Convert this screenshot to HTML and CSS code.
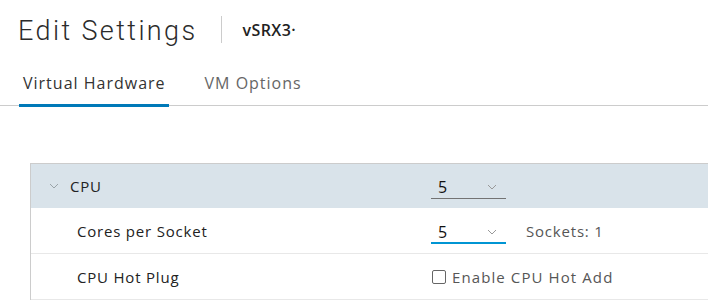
FILE: index.html
```html
<!DOCTYPE html>
<html lang="en">
<head>
    <meta charset="UTF-8">
    <meta name="viewport" content="width=device-width, initial-scale=1.0">
    <title>Edit Settings</title>
    <link rel="stylesheet" href="styles.css">
</head>
<body>
    <div class="modal">
        <div class="modal-header">
            <h1 class="title">Edit Settings</h1>
            <span class="divider"></span>
            <span class="vm-name">vSRX3&middot;</span>
        </div>

        <div class="tabs">
            <a class="tab active">Virtual Hardware</a>
            <a class="tab">VM Options</a>
        </div>

        <div class="hw-list">
            <div class="row group">
                <div class="label">
                    <svg class="caret" width="10" height="6" viewBox="0 0 10 6"><path d="M1 1l4 4 4-4" fill="none" stroke="#9aa3a8" stroke-width="1"/></svg>
                    CPU
                </div>
                <div class="value">
                    <div class="select">
                        <span>5</span>
                        <svg width="10" height="6" viewBox="0 0 10 6"><path d="M1 1l4 4 4-4" fill="none" stroke="#999" stroke-width="1"/></svg>
                    </div>
                </div>
            </div>

            <div class="row">
                <div class="label sub">Cores per Socket</div>
                <div class="value">
                    <div class="select focus">
                        <span>5</span>
                        <svg width="10" height="6" viewBox="0 0 10 6"><path d="M1 1l4 4 4-4" fill="none" stroke="#999" stroke-width="1"/></svg>
                    </div>
                    <span class="hint">Sockets: 1</span>
                </div>
            </div>

            <div class="row">
                <div class="label sub">CPU Hot Plug</div>
                <div class="value">
                    <label class="check"><span class="box"></span>Enable CPU Hot Add</label>
                </div>
            </div>
        </div>
    </div>
</body>
</html>
```

FILE: styles.css
```css
body {
    margin: 0;
    font-family: "Open Sans", Lato, sans-serif;
    color: #313131;
    background: #fff;
}

.modal {
    width: 708px;
    height: 302px;
    overflow: hidden;
}

.modal-header {
    display: flex;
    align-items: center;
    height: 58px;
    box-sizing: border-box;
    padding: 4px 0 0 18px;
}

.title {
    margin: 0;
    font-family: Roboto, "Open Sans", sans-serif;
    font-size: 27px;
    font-weight: 300;
    color: #2b2b2b;
    letter-spacing: 2.4px;
}

.divider {
    width: 1px;
    height: 27px;
    background: #ccc;
    margin: -3px 21px 0 23px;
}

.vm-name {
    font-size: 16px;
    font-weight: 600;
    color: #222;
    letter-spacing: 0.4px;
    margin-top: -2px;
}

.tabs {
    display: flex;
    margin-top: 12px;
    border-bottom: 1px solid #ccc;
}

.tab {
    font-size: 16px;
    color: #666;
    padding: 2px 3px 10px 4px;
    margin-left: 19px;
    letter-spacing: 1px;
}

.tab.active {
    color: #333;
    border-bottom: 3px solid #0079b8;
    margin-bottom: -2px;
}

.tab + .tab {
    margin-left: 32px;
}

.hw-list {
    margin: 57px 0 0 30px;
    border-top: 1px solid #ccc;
    border-left: 1px solid #ccc;
}

.row {
    display: grid;
    grid-template-columns: 400px 1fr;
    align-items: center;
    height: 46px;
    box-sizing: border-box;
    border-bottom: 1px solid #e8e8e8;
    font-size: 15px;
    letter-spacing: 0.8px;
}

.row.group {
    height: 44px;
    background: #d9e3ea;
    border-bottom: none;
    padding-bottom: 1px;
}

.label {
    display: flex;
    align-items: center;
    color: #222;
}

.caret {
    margin: 0 11px 0 18px;
}

.label.sub {
    padding-left: 46px;
}

.value {
    display: flex;
    align-items: center;
}

.select {
    display: flex;
    align-items: center;
    justify-content: space-between;
    width: 75px;
    height: 26px;
    box-sizing: border-box;
    padding: 4px 9px 0 7px;
    border-bottom: 1px solid #737373;
    font-size: 16px;
    color: #111;
}

.select.focus {
    border-bottom: 2px solid #0095d3;
}

.hint {
    margin-left: 20px;
    color: #565656;
}

.check {
    display: flex;
    align-items: center;
    color: #565656;
    letter-spacing: 1.1px;
}

.box {
    width: 12px;
    height: 12px;
    border: 1px solid #666;
    border-radius: 2px;
    margin: 0 6px 0 1px;
}
```
